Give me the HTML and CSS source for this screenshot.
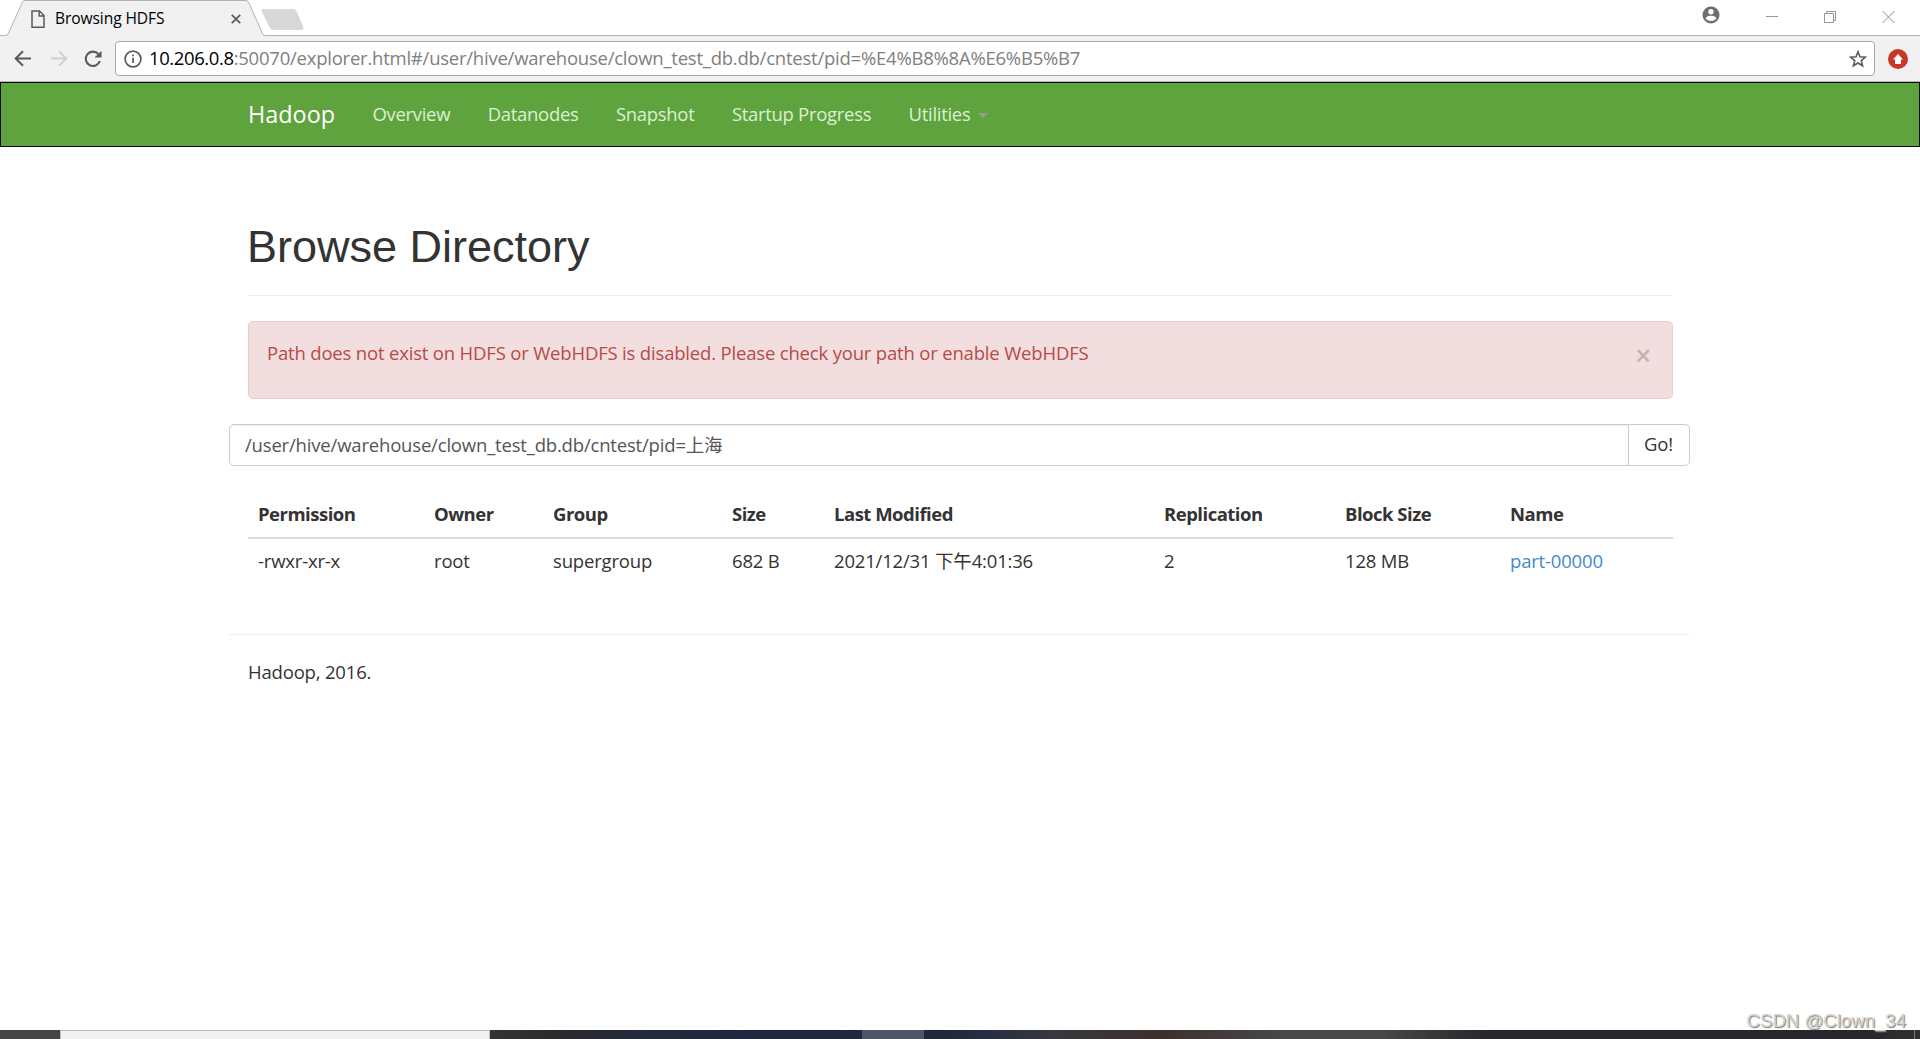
FILE: index.html
```html
<!DOCTYPE html>
<html lang="zh-CN">
<head>
<meta charset="utf-8">
<title>Browsing HDFS</title>
<link rel="stylesheet" href="styles.css">
</head>
<body>
<header class="tabstrip">
  <div class="tab">
    <svg class="tab-shape" width="310" height="36" viewBox="0 0 310 36">
      <path d="M0 36V35.5H5.5Q7.5 35.5 8.3 33.5L22.3 2.5Q23.2.5 25 .5H246Q247.800.5 248.700 2.500L262.500 33.500Q263.400 35.500 265 35.500H310V36Z" fill="#f1f1f1"/>
      <path d="M0 35.5H5.500Q7.500 35.500 8.300 33.500L22.300 2.500Q23.200 .500 25 .500H246Q247.800 .500 248.700 2.500L262.500 33.500Q263.400 35.500 265 35.500H310" fill="none" stroke="#b1b1b1"/>
      <path d="M263 9.500H293.500Q295.500 9.500 296.300 11.500L303 27.500Q303.800 29.500 302 29.500H273Q271 29.500 270 27.500L262 11Q261.500 9.500 263 9.500Z" fill="#d8d8d8" stroke="#cfcfcf" stroke-width=".6"/>
    </svg>
    <svg class="file-icon" width="14" height="19" viewBox="0 0 14 19"><path d="M1 1H8.500L13 5.500V17.300H1ZM8.200 1V6H13" fill="none" stroke="#5a5a5a" stroke-width="1.500"/></svg>
    <span class="tab-title">Browsing HDFS</span>
    <svg class="tab-close" width="10" height="10" viewBox="0 0 10 10"><path d="M.8.8 9.200 9.200M9.200.8.8 9.200" stroke="#5a5a5a" stroke-width="1.700"/></svg>
  </div>
  <div class="window-buttons">
    <svg width="18" height="18" viewBox="0 0 18 18"><circle cx="9" cy="9" r="8.500" fill="#6e6e6e"/><circle cx="9" cy="5.800" r="2.700" fill="#fff"/><path d="M3.500 12.200C4.500 10.200 7 9.700 9 9.700S13.500 10.200 14.500 12.200C13.200 14 11.200 15 9 15S4.800 14 3.500 12.200Z" fill="#fff"/></svg>
    <svg width="12" height="12" viewBox="0 0 12 12"><path d="M0 5.500H12" stroke="#999"/></svg>
    <svg width="12" height="12" viewBox="0 0 12 12"><path d="M.5 2.500H9.500V11.500H.5ZM2.500 2.500V.5H11.500V9.500H9.500" fill="none" stroke="#999"/></svg>
    <svg width="13" height="12" viewBox="0 0 13 12"><path d="M.5 0 12.500 12M12.500 0 .5 12" stroke="#8c8c8c"/></svg>
  </div>
</header>
<div class="toolbar">
  <svg class="back" width="18" height="17" viewBox="0 0 18 17"><path d="M17 8.500H2M9 1.300 1.700 8.500 9 15.700" fill="none" stroke="#5a5a5a" stroke-width="2"/></svg>
  <svg class="forward" width="18" height="17" viewBox="0 0 18 17"><path d="M1 8.500H16M9 1.300 16.300 8.500 9 15.700" fill="none" stroke="#d0d0d0" stroke-width="2"/></svg>
  <svg class="reload" width="18" height="18" viewBox="0 0 18 18"><path d="M15.800 11A7.200 7.200 0 1 1 14.300 4" fill="none" stroke="#5a5a5a" stroke-width="2.100"/><path d="M17.500.8V7.500H10.500Z" fill="#5a5a5a"/></svg>
  <div class="omnibox">
    <svg width="18" height="18" viewBox="0 0 18 18"><circle cx="9" cy="9" r="7.900" fill="none" stroke="#5a5a5a" stroke-width="1.700"/><path d="M9 7.700V13M9 4.600V6.300" stroke="#5a5a5a" stroke-width="1.700"/></svg>
    <span class="url"><span class="host">10.206.0.8</span>:50070/explorer.html#/user/hive/warehouse/clown_test_db.db/cntest/pid=%E4%B8%8A%E6%B5%B7</span>
    <svg class="star" width="18" height="18" viewBox="0 0 18 18"><path d="M9 1.800 11 6.700 16.400 7.100 12.300 10.600 13.600 15.800 9 13 4.400 15.800 5.700 10.600 1.600 7.100 7 6.700Z" fill="none" stroke="#5a5a5a" stroke-width="1.600"/></svg>
  </div>
  <svg class="extension" width="20" height="20" viewBox="0 0 20 20"><circle cx="10" cy="10" r="10" fill="#c83727"/><path d="M10 5 15 10.500H13V15H7V10.500H5Z" fill="#fff"/></svg>
</div>
<nav class="navbar">
  <a class="brand">Hadoop</a>
  <a>Overview</a>
  <a>Datanodes</a>
  <a>Snapshot</a>
  <a>Startup Progress</a>
  <a class="dropdown">Utilities<span class="caret"></span></a>
</nav>
<main class="container">
  <h1>Browse Directory</h1>
  <div class="alert"><p>Path does not exist on HDFS or WebHDFS is disabled. Please check your path or enable WebHDFS</p><span class="close">×</span></div>
  <div class="path-form"><div class="path-input">/user/hive/warehouse/clown_test_db.db/cntest/pid=上海</div><div class="go">Go!</div></div>
  <table>
    <colgroup><col class="c-perm"><col class="c-owner"><col class="c-group"><col class="c-size"><col class="c-date"><col class="c-repl"><col class="c-block"><col class="c-name"></colgroup>
    <thead><tr><th>Permission</th><th>Owner</th><th>Group</th><th>Size</th><th>Last Modified</th><th>Replication</th><th>Block Size</th><th>Name</th></tr></thead>
    <tbody><tr><td>-rwxr-xr-x</td><td>root</td><td>supergroup</td><td>682 B</td><td>2021/12/31 下午4:01:36</td><td>2</td><td>128 MB</td><td><a>part-00000</a></td></tr></tbody>
  </table>
  <footer>Hadoop, 2016.</footer>
</main>
<div class="taskbar">
  <div class="start"></div><div class="search"></div><div class="desktop"><div class="active-app"></div><div class="clock">10:25</div><div class="peek"></div></div>
</div>
<div class="watermark">CSDN @Clown_34</div>
</body>
</html>
```
FILE: styles.css
```css
* { box-sizing: border-box; }
body {
  margin: 0;
  height: 1039px;
  overflow: hidden;
  display: flex;
  flex-direction: column;
  background: #fff;
  color: #333;
  font: 18.5px/25px "Open Sans", "Noto Sans CJK SC", sans-serif;
  letter-spacing: -0.18px;
}
svg { display: block; flex: none; }

.tabstrip {
  flex: none;
  height: 36px;
  display: flex;
  justify-content: space-between;
  border-bottom: 1px solid #b1b1b1;
}
.tab {
  position: relative;
  width: 310px;
  height: 36px;
  padding-left: 31px;
  display: flex;
  align-items: flex-start;
}
.tab-shape { position: absolute; left: 0; top: 0; }
.file-icon { position: relative; margin-top: 10px; }
.tab-title {
  position: relative;
  width: 186px;
  padding-left: 10px;
  margin-top: 6px;
  font-size: 15.6px;
  letter-spacing: -0.1px;
  color: #000;
}
.tab-close { position: relative; margin: 14px 0 0; }
.window-buttons {
  display: flex;
  align-items: center;
  padding: 0 25px 2px 0;
}
.window-buttons svg:nth-child(1) { margin: 0 46px 4px 0; }
.window-buttons svg:nth-child(2) { margin-right: 46px; }
.window-buttons svg:nth-child(3) { margin-right: 46px; }

.toolbar {
  flex: none;
  height: 46px;
  display: flex;
  align-items: center;
  padding: 0 12px 0 14px;
  background: #f1f1f1;
  border-bottom: 1px solid #b6b4b6;
}
.forward { margin-left: 18px; }
.reload { margin: 0 13px 0 16px; }
.omnibox {
  flex: 1;
  height: 35px;
  display: flex;
  align-items: center;
  padding: 0 7px 0 8px;
  margin-right: 13px;
  background: #fff;
  border: 1px solid #a9a9a9;
  border-radius: 4px;
}
.url { flex: 1; padding: 0 0 2px 7px; color: #808080; letter-spacing: -0.23px; }
.host { color: #000; letter-spacing: -0.4px; }

.navbar {
  flex: none;
  height: 65px;
  display: flex;
  align-items: center;
  gap: 37.4px;
  padding-left: 247px;
  background: #5fa33e;
  border: 1px solid #080808;
  color: #dcf0d2;
  letter-spacing: -0.3px;
}
.navbar a { padding-bottom: 3px; }
.navbar .brand { padding-bottom: 1px; font-size: 23.4px; letter-spacing: 0; color: #fff; }
.dropdown { display: flex; align-items: center; }
.caret {
  margin: 5px 0 0 8px;
  border: 5px solid transparent;
  border-top-color: #999;
  border-bottom: 0;
}

.container {
  flex: none;
  width: 1461px;
  height: 883px;
  margin-left: 229px;
  padding-top: 75px;
}
h1 {
  margin: 0 18px 25px 19px;
  padding-bottom: 23px;
  border-bottom: 1px solid #eee;
  font: 500 45px/50px "Liberation Sans", sans-serif;
  letter-spacing: 0;
  text-indent: -1px;
}
.alert {
  height: 78px;
  margin: 0 17px 25px 19px;
  padding: 18px 21px 0 18px;
  display: flex;
  justify-content: space-between;
  background: #f2dede;
  border: 1px solid #ebccd1;
  border-radius: 5px;
  color: #b94a48;
}
.alert p { margin: 0; }
.close { padding-top: 3px; font-size: 28px; font-weight: 600; color: #c2b2b2; }
.path-form { height: 42px; display: flex; }
.path-input {
  flex: 1;
  padding: 7px 15px;
  border: 1px solid #ccc;
  border-radius: 5px 0 0 5px;
  box-shadow: inset 0 1px 1px rgba(0, 0, 0, .075);
  color: #555;
}
.go {
  width: 61px;
  padding: 6px 0 0 15px;
  border: 1px solid #ccc;
  border-left: 0;
  border-radius: 0 5px 5px 0;
}
table {
  width: 1425px;
  margin: 25px 0 0 19px;
  table-layout: fixed;
  border-collapse: separate;
  border-spacing: 0;
}
.c-perm { width: 176px; }
.c-owner { width: 119px; }
.c-group { width: 179px; }
.c-size { width: 102px; }
.c-date { width: 330px; }
.c-repl { width: 181px; }
.c-block { width: 165px; }
.c-name { width: 173px; }
th, td { padding: 9px 0 10px 10px; text-align: left; line-height: 25px; }
th { padding: 10px 0 11px 10px; border-bottom: 2px solid #ddd; font-weight: 700; letter-spacing: -0.5px; }
td a { color: #428bca; }
footer {
  margin-top: 51px;
  padding: 24px 0 0 19px;
  border-top: 1px solid #eee;
}

.taskbar { flex: none; height: 9px; display: flex; }
.start { width: 60px; background: #454545; }
.search { width: 430px; background: #f1f1f1; border: 1px solid #bdbdbd; border-bottom: 0; }
.desktop {
  flex: 1;
  height: 9px;
  display: flex;
  overflow: hidden;
  background: linear-gradient(90deg, #343436 0, #29282c 80px, #232a3b 150px, #1e283e 250px, #20283a 460px, #252d42 490px, #37383e 560px, #3c302e 670px, #474747 790px, #484848 890px, #26262b 1000px, #26262b 1370px, #303032 1430px);
}
.active-app { width: 62px; margin-left: 372px; background: #4d5464; }
.clock { margin-left: 866px; padding-top: 6px; width: 40px; font-size: 15px; line-height: 14px; color: #fff; letter-spacing: 0; }
.peek { margin-left: 84px; width: 1px; background: #777; }
.watermark {
  position: absolute;
  right: 14px;
  top: 1009px;
  font: 18.6px/23px "Liberation Sans", sans-serif;
  letter-spacing: 0;
  color: #d2d2d2;
  text-shadow: 1px 1px 1px #777;
}
```
